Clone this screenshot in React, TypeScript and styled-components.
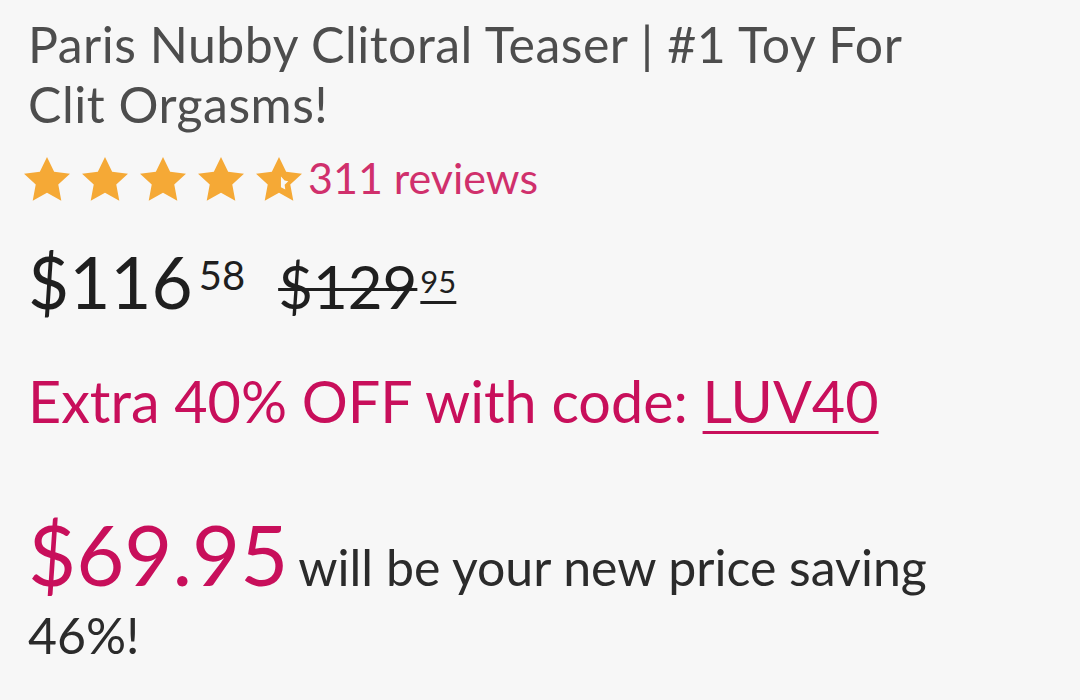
import React from 'react'
import styled, { createGlobalStyle } from 'styled-components'

const GlobalStyle = createGlobalStyle`
  html, body {
    margin: 0;
    padding: 0;
    background: #f7f7f7;
  }
  body {
    font-family: Lato, 'Open Sans', sans-serif;
  }
`

const Wrapper = styled.div`
  width: 960px;
  padding: 14px 28px 0;
  display: flex;
  flex-direction: column;
`

const Title = styled.h1`
  margin: 0;
  max-width: 900px;
  font-size: 50px;
  line-height: 60px;
  letter-spacing: 0.5px;
  font-weight: 400;
  color: #4d4d4d;
`

const RatingRow = styled.div`
  margin-top: 20px;
  display: flex;
  align-items: center;
  height: 48px;
`

const Stars = styled.div`
  display: flex;
  gap: 6px;
  margin-left: -7px;
  margin-top: 4px;

  svg {
    display: block;
    width: 52px;
    height: 52px;
  }
`

const Reviews = styled.a`
  margin-left: 3px;
  font-size: 43px;
  line-height: 48px;
  color: #d0306c;
  text-decoration: none;
`

const PriceRow = styled.div`
  margin-top: 40px;
  font-size: 71px;
  line-height: 80px;
  color: #1f1f1f;
  white-space: nowrap;
`

const Cents = styled.span<{ size: number; raise: number }>`
  font-size: ${({ size }) => size}px;
  line-height: 1;
  vertical-align: ${({ raise }) => raise}px;
`

const NowCents = styled(Cents)`
  margin-left: 6px;
`

const WasPrice = styled.span`
  margin-left: 33px;
  font-size: 60px;
  text-decoration: line-through;
  text-decoration-thickness: 3px;
`

const WasCents = styled(Cents)`
  display: inline-block;
  margin-left: 3px;
  text-decoration: underline;
  text-decoration-thickness: 3px;
  text-underline-offset: 8px;
`

const Promo = styled.p`
  margin: 41px 0 0;
  font-size: 57.5px;
  line-height: 68px;
  color: #c80f5b;
`

const Code = styled.span`
  text-decoration: underline;
  text-decoration-thickness: 3px;
  text-underline-offset: 8px;
`

const Saving = styled.p`
  margin: 85px 0 0;
  font-size: 50px;
  line-height: 68px;
  color: #2b2b2b;
`

const NewPrice = styled.span`
  font-size: 83px;
  color: #c80f5b;
  margin-right: 10px;
`

const STAR = '12,1.4 15.3,8.2 22.6,9.1 17.2,14.1 18.6,21.6 12,17.9 5.4,21.6 6.8,14.1 1.4,9.1 8.7,8.2'

const Star: React.FC<{ half?: boolean }> = ({ half }) => (
  <svg viewBox="0 0 24 24">
    <polygon points={STAR} fill="#f5a936" />
    {half && <polygon points="12.9,10.4 14.6,12.2 16.3,12.6 14.6,14.2 14.9,16.4 12.9,15.4" fill="#f7f7f7" />}
  </svg>
)

const App: React.FC = () => {
  return (
    <>
      <GlobalStyle />
      <Wrapper>
        <Title>Paris Nubby Clitoral Teaser | #1 Toy For Clit Orgasms!</Title>
        <RatingRow>
          <Stars>
            <Star />
            <Star />
            <Star />
            <Star />
            <Star half />
          </Stars>
          <Reviews href="#reviews">311 reviews</Reviews>
        </RatingRow>
        <PriceRow>
          $116
          <NowCents size={40} raise={19}>
            58
          </NowCents>
          <WasPrice>$129</WasPrice>
          <WasCents size={31} raise={16}>
            95
          </WasCents>
        </PriceRow>
        <Promo>
          Extra 40% OFF with code: <Code>LUV40</Code>
        </Promo>
        <Saving>
          <NewPrice>$69.95</NewPrice>will be your new price saving 46%!
        </Saving>
      </Wrapper>
    </>
  )
}

export default App
